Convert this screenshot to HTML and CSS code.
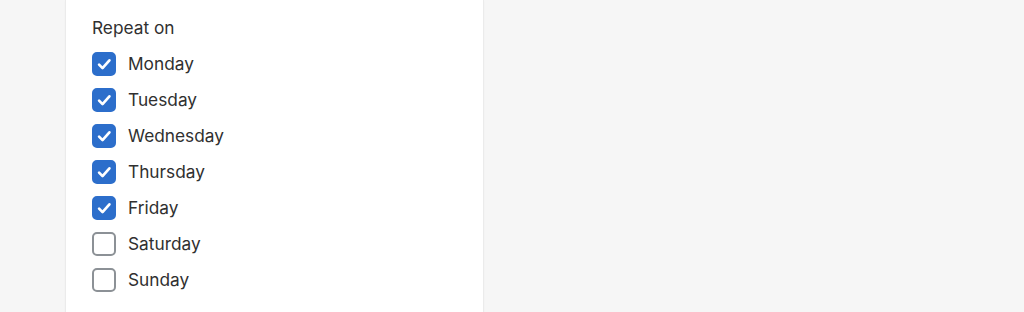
FILE: index.html
```html
<!DOCTYPE html>
<html lang="en">
<head>
<meta charset="UTF-8">
<meta name="viewport" content="width=device-width, initial-scale=1.0">
<title>Repeat on</title>
<link rel="stylesheet" href="styles.css">
</head>
<body>

<div class="card">
    <div class="group-label">Repeat on</div>
    <div class="day-list">
        <label class="day"><input type="checkbox" checked><span class="box"></span>Monday</label>
        <label class="day"><input type="checkbox" checked><span class="box"></span>Tuesday</label>
        <label class="day"><input type="checkbox" checked><span class="box"></span>Wednesday</label>
        <label class="day"><input type="checkbox" checked><span class="box"></span>Thursday</label>
        <label class="day"><input type="checkbox" checked><span class="box"></span>Friday</label>
        <label class="day"><input type="checkbox"><span class="box"></span>Saturday</label>
        <label class="day"><input type="checkbox"><span class="box"></span>Sunday</label>
    </div>
</div>

</body>
</html>
```

FILE: styles.css
```css
body {
    font-family: Inter, "Noto Sans", sans-serif;
    margin: 0;
    padding: 0;
    background-color: #f6f6f6;
    color: #303030;
}

.card {
    width: 417px;
    height: 100vh;
    margin-left: 66px;
    padding: 17px 26px 0;
    box-sizing: border-box;
    background-color: #fff;
    box-shadow: 0 0 0 1px #ebebeb, 0 1px 3px rgba(0, 0, 0, 0.06);
}

.group-label {
    font-size: 17.3px;
    line-height: 22px;
    margin-bottom: 13px;
}

.day-list {
    display: flex;
    flex-direction: column;
    gap: 12px;
}

.day {
    display: flex;
    align-items: center;
    gap: 12px;
    font-size: 17.3px;
    line-height: 24px;
    cursor: pointer;
}

.day input {
    display: none;
}

.box {
    width: 24px;
    height: 24px;
    box-sizing: border-box;
    border: 2px solid #8c9196;
    border-radius: 5px;
    background-color: #fff;
}

.day input:checked + .box {
    border-color: #2c6ecb;
    background-color: #2c6ecb;
    background-image: url("data:image/svg+xml,%3Csvg xmlns='http://www.w3.org/2000/svg' viewBox='0 0 20 20'%3E%3Cpath d='M5.2 10.4l3.2 3.2 6.4-7.2' fill='none' stroke='%23fff' stroke-width='2.5' stroke-linecap='round' stroke-linejoin='round'/%3E%3C/svg%3E");
    background-size: 21px 21px;
    background-position: center;
    background-repeat: no-repeat;
}
```
